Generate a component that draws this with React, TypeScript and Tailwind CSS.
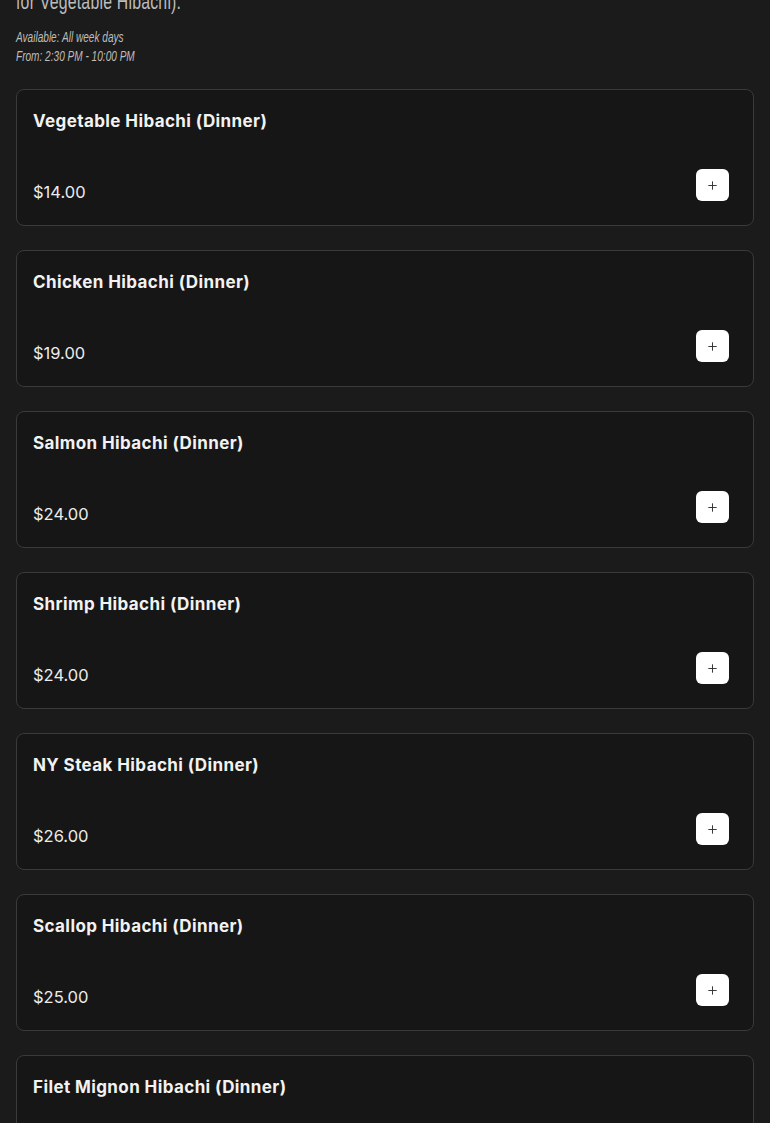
import { Plus } from 'lucide-react'

type Item = { name: string; price: string }

const ITEMS: Item[] = [
  { name: 'Vegetable Hibachi (Dinner)', price: '$14.00' },
  { name: 'Chicken Hibachi (Dinner)', price: '$19.00' },
  { name: 'Salmon Hibachi (Dinner)', price: '$24.00' },
  { name: 'Shrimp Hibachi (Dinner)', price: '$24.00' },
  { name: 'NY Steak Hibachi (Dinner)', price: '$26.00' },
  { name: 'Scallop Hibachi (Dinner)', price: '$25.00' },
  { name: 'Filet Mignon Hibachi (Dinner)', price: '$28.00' },
]

function MenuCard({ item }: { item: Item }) {
  return (
    <div className="rounded-lg border border-[#3a3a3a] bg-[#161616] px-4 pt-4 pb-[21px]">
      <div className="text-[17px] font-bold leading-[30px] tracking-[0.4px] text-[#f2f2f2] font-['Inter',sans-serif]">
        {item.name}
      </div>
      <div className="mt-[33px] flex items-end justify-between pr-[8px]">
        <span className="text-[16.5px] leading-6 text-[#ececec] font-['Inter',sans-serif]">
          {item.price}
        </span>
        <button className="mb-[3px] flex h-8 w-[33px] items-center justify-center rounded-md bg-white text-[#333]">
          <Plus size={13} strokeWidth={1.8} />
        </button>
      </div>
    </div>
  )
}

export default function App() {
  return (
    <div className="min-h-[1123px] bg-[#1b1b1b] px-4 pb-10">
      {/* hours / note header, partly scrolled off */}
      <div className="origin-left scale-x-[0.72] font-['Liberation_Sans',sans-serif] text-[#bdbdbd]">
        <p className="-mt-[12px] text-[22px] leading-[28px] tracking-[0.3px] whitespace-nowrap">for Vegetable Hibachi).</p>
        <p className="mt-[12px] text-[14px] italic leading-[19px] whitespace-nowrap">Available: All week days</p>
        <p className="text-[14px] italic leading-[19px] whitespace-nowrap">From: 2:30 PM - 10:00 PM</p>
      </div>

      <div className="mt-[23px] flex flex-col gap-6">
        {ITEMS.map((it) => (
          <MenuCard key={it.name} item={it} />
        ))}
      </div>
    </div>
  )
}
